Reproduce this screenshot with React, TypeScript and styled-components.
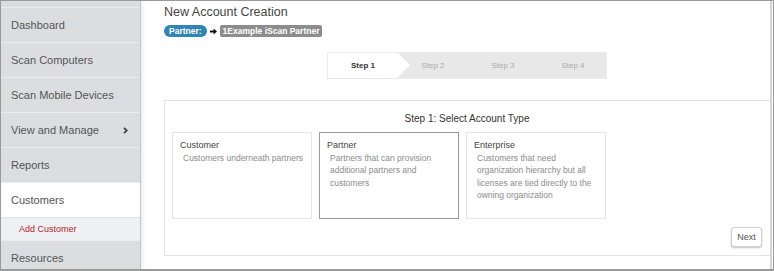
import styled, { createGlobalStyle } from "styled-components";

const GlobalStyle = createGlobalStyle`
  html, body {
    margin: 0;
    padding: 0;
    background: #fff;
  }
  body {
    font-family: "Liberation Sans", Arial, sans-serif;
  }
`;

const Frame = styled.div`
  width: 774px;
  height: 271px;
  box-sizing: border-box;
  border: 1px solid #9a9a9a;
  border-bottom-width: 2px;
  padding-right: 1px;
  display: flex;
  overflow: hidden;
  background: #fff;
`;

const Sidebar = styled.nav`
  width: 140px;
  flex: none;
  box-sizing: border-box;
  background: #dcdde1;
  border-right: 1px solid #c4c5c9;
  padding-top: 6px;
  position: relative;
  z-index: 1;
  box-shadow: 2px 0 4px rgba(0, 0, 0, 0.08);
`;

const NavItem = styled.div<{ $active?: boolean }>`
  height: 35px;
  box-sizing: border-box;
  border-top: 1px solid #eaebee;
  display: flex;
  align-items: center;
  justify-content: space-between;
  padding: 0 12px 0 10px;
  font-size: 11px;
  color: #555;
  background: ${(p) => (p.$active ? "#fff" : "transparent")};
`;

const SubItem = styled.div`
  height: 23px;
  box-sizing: border-box;
  border-top: 1px solid #e2e3e6;
  display: flex;
  align-items: center;
  padding-left: 18px;
  font-size: 9px;
  color: #b3262f;
  background: #eef0f3;
`;

const Main = styled.main`
  flex: 1;
  min-width: 0;
  box-sizing: border-box;
  border-right: 2px solid #d4d4d4;
  padding: 1px 0 0 23px;
  display: flex;
  flex-direction: column;
`;

const Title = styled.h1`
  margin: 0;
  padding-top: 1px;
  font-size: 12.5px;
  line-height: 18px;
  font-weight: normal;
  color: #444;
`;

const Breadcrumb = styled.div`
  margin-top: 4px;
  height: 12px;
  display: flex;
  align-items: center;
  gap: 2px;
`;

const Badge = styled.span<{ $tone: "blue" | "gray" }>`
  height: 12px;
  line-height: 12px;
  padding: 0 ${(p) => (p.$tone === "blue" ? "5px" : "3px")};
  border-radius: ${(p) => (p.$tone === "blue" ? "6px" : "2px")};
  background: ${(p) => (p.$tone === "blue" ? "#2f85b6" : "#8c8c8c")};
  color: #fff;
  font-size: 8.5px;
  font-weight: bold;
  white-space: nowrap;
`;

const Arrow = styled.svg`
  margin: 0 1px 0 1px;
`;

const Steps = styled.div`
  margin-top: 15px;
  align-self: center;
  width: 280px;
  height: 27px;
  box-sizing: border-box;
  border: 1px solid #ececec;
  background: #e8e8e8;
  display: flex;
`;

const Step = styled.div<{ $active?: boolean }>`
  width: 70px;
  flex: none;
  display: flex;
  align-items: center;
  justify-content: center;
  font-size: 8px;
  font-weight: ${(p) => (p.$active ? "bold" : "normal")};
  color: ${(p) => (p.$active ? "#333" : "#aaa")};
  background: ${(p) => (p.$active ? "#fff" : "transparent")};
  position: relative;
  z-index: ${(p) => (p.$active ? 1 : 0)};

  &::after {
    content: "";
    display: ${(p) => (p.$active ? "block" : "none")};
    position: absolute;
    right: -12px;
    top: 0;
    border-left: 12px solid #fff;
    border-top: 12.5px solid transparent;
    border-bottom: 12.5px solid transparent;
  }
`;

const Panel = styled.section`
  margin-top: 21px;
  box-sizing: border-box;
  border: 1px solid #e4e4e4;
  border-right: none;
  padding: 11px 8px 8px 7px;
  display: flex;
  flex-direction: column;
`;

const PanelHeading = styled.h2`
  margin: 0;
  font-size: 10px;
  line-height: 14px;
  font-weight: normal;
  color: #333;
  text-align: center;
`;

const Cards = styled.div`
  margin-top: 6px;
  display: flex;
  gap: 7px;
`;

const Card = styled.div<{ $selected?: boolean }>`
  width: 140px;
  height: 87px;
  box-sizing: border-box;
  border: 1px solid ${(p) => (p.$selected ? "#9a9a9a" : "#e6e6e6")};
  padding: 6px 7px;
`;

const CardTitle = styled.div`
  font-size: 9px;
  line-height: 13px;
  color: #444;
`;

const CardText = styled.div`
  margin-left: 3px;
  font-size: 8.5px;
  line-height: 12.3px;
  color: #8c8c8c;
`;

const Footer = styled.div`
  margin-top: 8px;
  display: flex;
  justify-content: flex-end;
`;

const NextButton = styled.button`
  width: 31px;
  height: 20px;
  box-sizing: border-box;
  padding: 0;
  border: 1px solid #cfcfcf;
  border-radius: 3px;
  background: #fff;
  box-shadow: 0 1px 2px rgba(0, 0, 0, 0.25);
  font-family: inherit;
  font-size: 9px;
  color: #555;
`;

const Chevron = () => (
  <svg width="5" height="7" viewBox="0 0 5 7">
    <polyline points="1,0.8 3.8,3.5 1,6.2" fill="none" stroke="#444" strokeWidth="1.8" />
  </svg>
);

const navItems = [
  { label: "Dashboard" },
  { label: "Scan Computers" },
  { label: "Scan Mobile Devices" },
  { label: "View and Manage", more: true },
  { label: "Reports" },
  { label: "Customers", active: true },
];

const accountTypes = [
  { title: "Customer", text: "Customers underneath partners" },
  { title: "Partner", text: "Partners that can provision additional partners and customers", selected: true },
  {
    title: "Enterprise",
    text: "Customers that need organization hierarchy but all licenses are tied directly to the owning organization",
  },
];

export default function App() {
  return (
    <>
      <GlobalStyle />
      <Frame>
        <Sidebar>
          {navItems.map((item) => (
            <NavItem key={item.label} $active={item.active}>
              <span>{item.label}</span>
              {item.more && <Chevron />}
            </NavItem>
          ))}
          <SubItem>Add Customer</SubItem>
          <NavItem>Resources</NavItem>
        </Sidebar>

        <Main>
          <Title>New Account Creation</Title>
          <Breadcrumb>
            <Badge $tone="blue">Partner:</Badge>
            <Arrow width="7" height="7" viewBox="0 0 7 7">
              <path d="M0 2.6 H3.6 V0.6 L7 3.5 L3.6 6.4 V4.4 H0 Z" fill="#111" />
            </Arrow>
            <Badge $tone="gray">1Example iScan Partner</Badge>
          </Breadcrumb>

          <Steps>
            <Step $active>Step 1</Step>
            <Step>Step 2</Step>
            <Step>Step 3</Step>
            <Step>Step 4</Step>
          </Steps>

          <Panel>
            <PanelHeading>Step 1: Select Account Type</PanelHeading>
            <Cards>
              {accountTypes.map((t) => (
                <Card key={t.title} $selected={t.selected}>
                  <CardTitle>{t.title}</CardTitle>
                  <CardText>{t.text}</CardText>
                </Card>
              ))}
            </Cards>
            <Footer>
              <NextButton>Next</NextButton>
            </Footer>
          </Panel>
        </Main>
      </Frame>
    </>
  );
}
